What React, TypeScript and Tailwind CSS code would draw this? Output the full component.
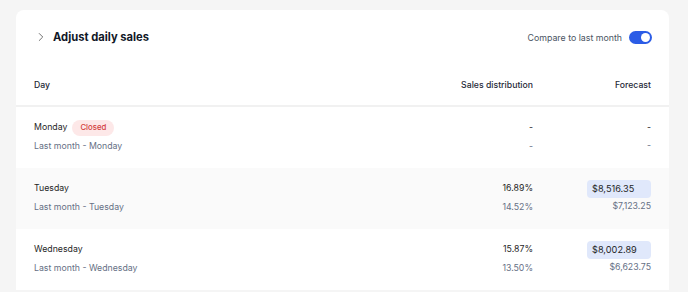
import { ChevronRight } from "lucide-react";

const rows = [
  { day: "Monday", closed: true, dist: "-", prevDist: "-", forecast: "-", prevForecast: "-" },
  { day: "Tuesday", closed: false, dist: "16.89%", prevDist: "14.52%", forecast: "$8,516.35", prevForecast: "$7,123.25" },
  { day: "Wednesday", closed: false, dist: "15.87%", prevDist: "13.50%", forecast: "$8,002.89", prevForecast: "$6,623.75" },
];

const App = () => {
  return (
    <div className="min-h-screen bg-[#f5f5f5] pl-4 pr-[19px] pt-[10px] font-['Inter',sans-serif]">
      <div className="bg-white rounded-t-lg">
        <div className="flex items-center justify-between h-[53px] pt-[2px] pl-[18px] pr-[17px]">
          <div className="flex items-center gap-[5px]">
            <ChevronRight className="w-[14px] h-[14px] text-[#555]" strokeWidth={1.4} />
            <h2 className="text-[11.2px] font-bold text-[#111827]">Adjust daily sales</h2>
          </div>
          <div className="flex items-center gap-[7px]">
            <span className="text-[8.8px] text-[#4b5563]">Compare to last month</span>
            <div className="flex items-center justify-end w-[23px] h-[13px] rounded-full bg-[#2b5ce6] px-[2px]">
              <div className="w-[9px] h-[9px] rounded-full bg-white" />
            </div>
          </div>
        </div>

        <div className="grid grid-cols-[1fr_140px_118px] items-center h-[44px] pt-[3px] px-[18px] border-b-2 border-[#f1f1f1] text-[8.7px] font-medium text-[#1f2937]">
          <span>Day</span>
          <span className="text-right">Sales distribution</span>
          <span className="text-right">Forecast</span>
        </div>

        {rows.map((row, i) => (
          <div
            key={row.day}
            className={`grid grid-cols-[1fr_140px_118px] grid-rows-[18px_18px] gap-y-[1px] items-center py-[12px] px-[18px] text-[8.75px] ${
              i % 2 === 1 ? "bg-[#fafafa]" : "bg-white"
            }`}
          >
            <div className="flex items-center gap-[5px] text-[#1f1f1f]">
              {row.day}
              {row.closed && (
                <span className="flex items-center h-[16px] rounded-full bg-[#fde8e8] text-[#d23c3c] text-[7.8px] font-medium px-[8px]">
                  Closed
                </span>
              )}
            </div>
            <div className="text-right text-[#1f1f1f]">{row.dist}</div>
            <div className="flex justify-end">
              {row.forecast === "-" ? (
                <span className="text-[#1f1f1f]">-</span>
              ) : (
                <span className="w-[64px] h-[18px] flex items-center pl-[5px] rounded bg-[#e0e8fb] text-[#1f1f1f] text-[9.2px]">
                  {row.forecast}
                </span>
              )}
            </div>
            <div className="text-[#667085]">Last month - {row.day}</div>
            <div className="text-right text-[#667085]">{row.prevDist}</div>
            <div className="text-right text-[#667085] -mt-[2px]">{row.prevForecast}</div>
          </div>
        ))}
      </div>
    </div>
  );
};

export default App;
